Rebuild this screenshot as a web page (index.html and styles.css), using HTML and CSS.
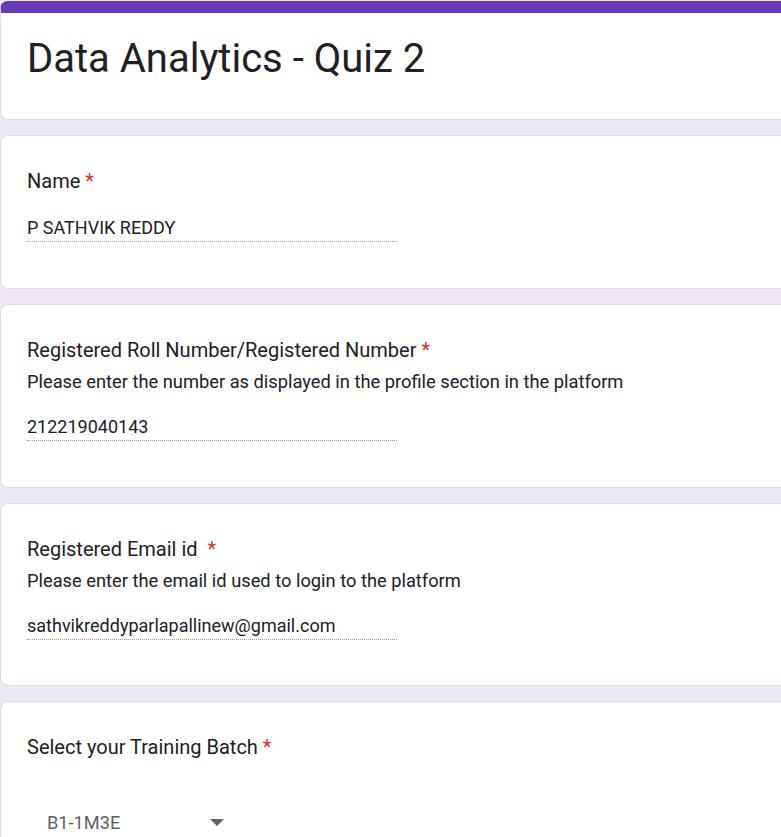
FILE: index.html
```html
<!DOCTYPE html>
<html>
<head>
<meta charset="utf-8">
<link rel="stylesheet" href="styles.css">
</head>
<body>
<div class="page">
  <div class="card header-card">
    <h1 class="title">Data Analytics - Quiz 2</h1>
  </div>

  <div class="card question">
    <div class="q-title">Name <span class="req">*</span></div>
    <div class="answer">P SATHVIK REDDY</div>
  </div>

  <div class="card question">
    <div class="q-title">Registered Roll Number/Registered Number <span class="req">*</span></div>
    <div class="q-desc">Please enter the number as displayed in the profile section in the platform</div>
    <div class="answer">212219040143</div>
  </div>

  <div class="card question">
    <div class="q-title">Registered Email id &nbsp;<span class="req">*</span></div>
    <div class="q-desc">Please enter the email id used to login to the platform</div>
    <div class="answer">sathvikreddyparlapallinew@gmail.com</div>
  </div>

  <div class="card question last">
    <div class="q-title">Select your Training Batch <span class="req">*</span></div>
    <div class="select">
      <span class="select-value">B1-1M3E</span>
      <svg class="select-arrow" width="14" height="7" viewBox="0 0 14 7"><path d="M0 0 L14 0 L7 7 Z" fill="#5f6368"/></svg>
    </div>
  </div>
</div>
</body>
</html>
```

FILE: styles.css
```css
html, body {
  margin: 0;
  padding: 0;
  background: #ede7f6;
  overflow: hidden;
  font-family: Roboto, "Liberation Sans", Arial, sans-serif;
  color: #202124;
}

.page {
  width: 860px;
  padding-top: 1px;
  display: flex;
  flex-direction: column;
  gap: 15px;
}

.card {
  background: #fff;
  border: 1px solid #dadce0;
  border-radius: 8px;
  box-sizing: border-box;
}

.header-card {
  border-top: 12px solid #673ab7;
  height: 119px;
  padding: 0 26px;
}

.title {
  margin: 0;
  padding-top: 22px;
  font-size: 40px;
  font-weight: 400;
  line-height: 48px;
  letter-spacing: 0;
}

.question {
  padding: 30px 26px 0;
}

.question:nth-child(2) { height: 154px; }
.question:nth-child(3) { height: 184px; }
.question:nth-child(4) { height: 183px; }
.question.last { height: 200px; }

.q-title {
  font-size: 20px;
  line-height: 30px;
}

.req {
  color: #d93025;
}

.q-desc {
  margin-top: 3px;
  font-size: 18.3px;
  line-height: 28px;
}

.answer {
  margin-top: 18px;
  width: 370px;
  font-size: 18px;
  line-height: 26px;
  border-bottom: 1px dotted #9e9e9e;
}

.q-title + .answer {
  margin-top: 19px;
}

.select {
  margin-top: 50px;
  display: flex;
  align-items: center;
  padding-left: 20px;
  width: 200px;
}

.select-value {
  font-size: 18.2px;
  color: #5f6368;
  width: 163px;
}
```
